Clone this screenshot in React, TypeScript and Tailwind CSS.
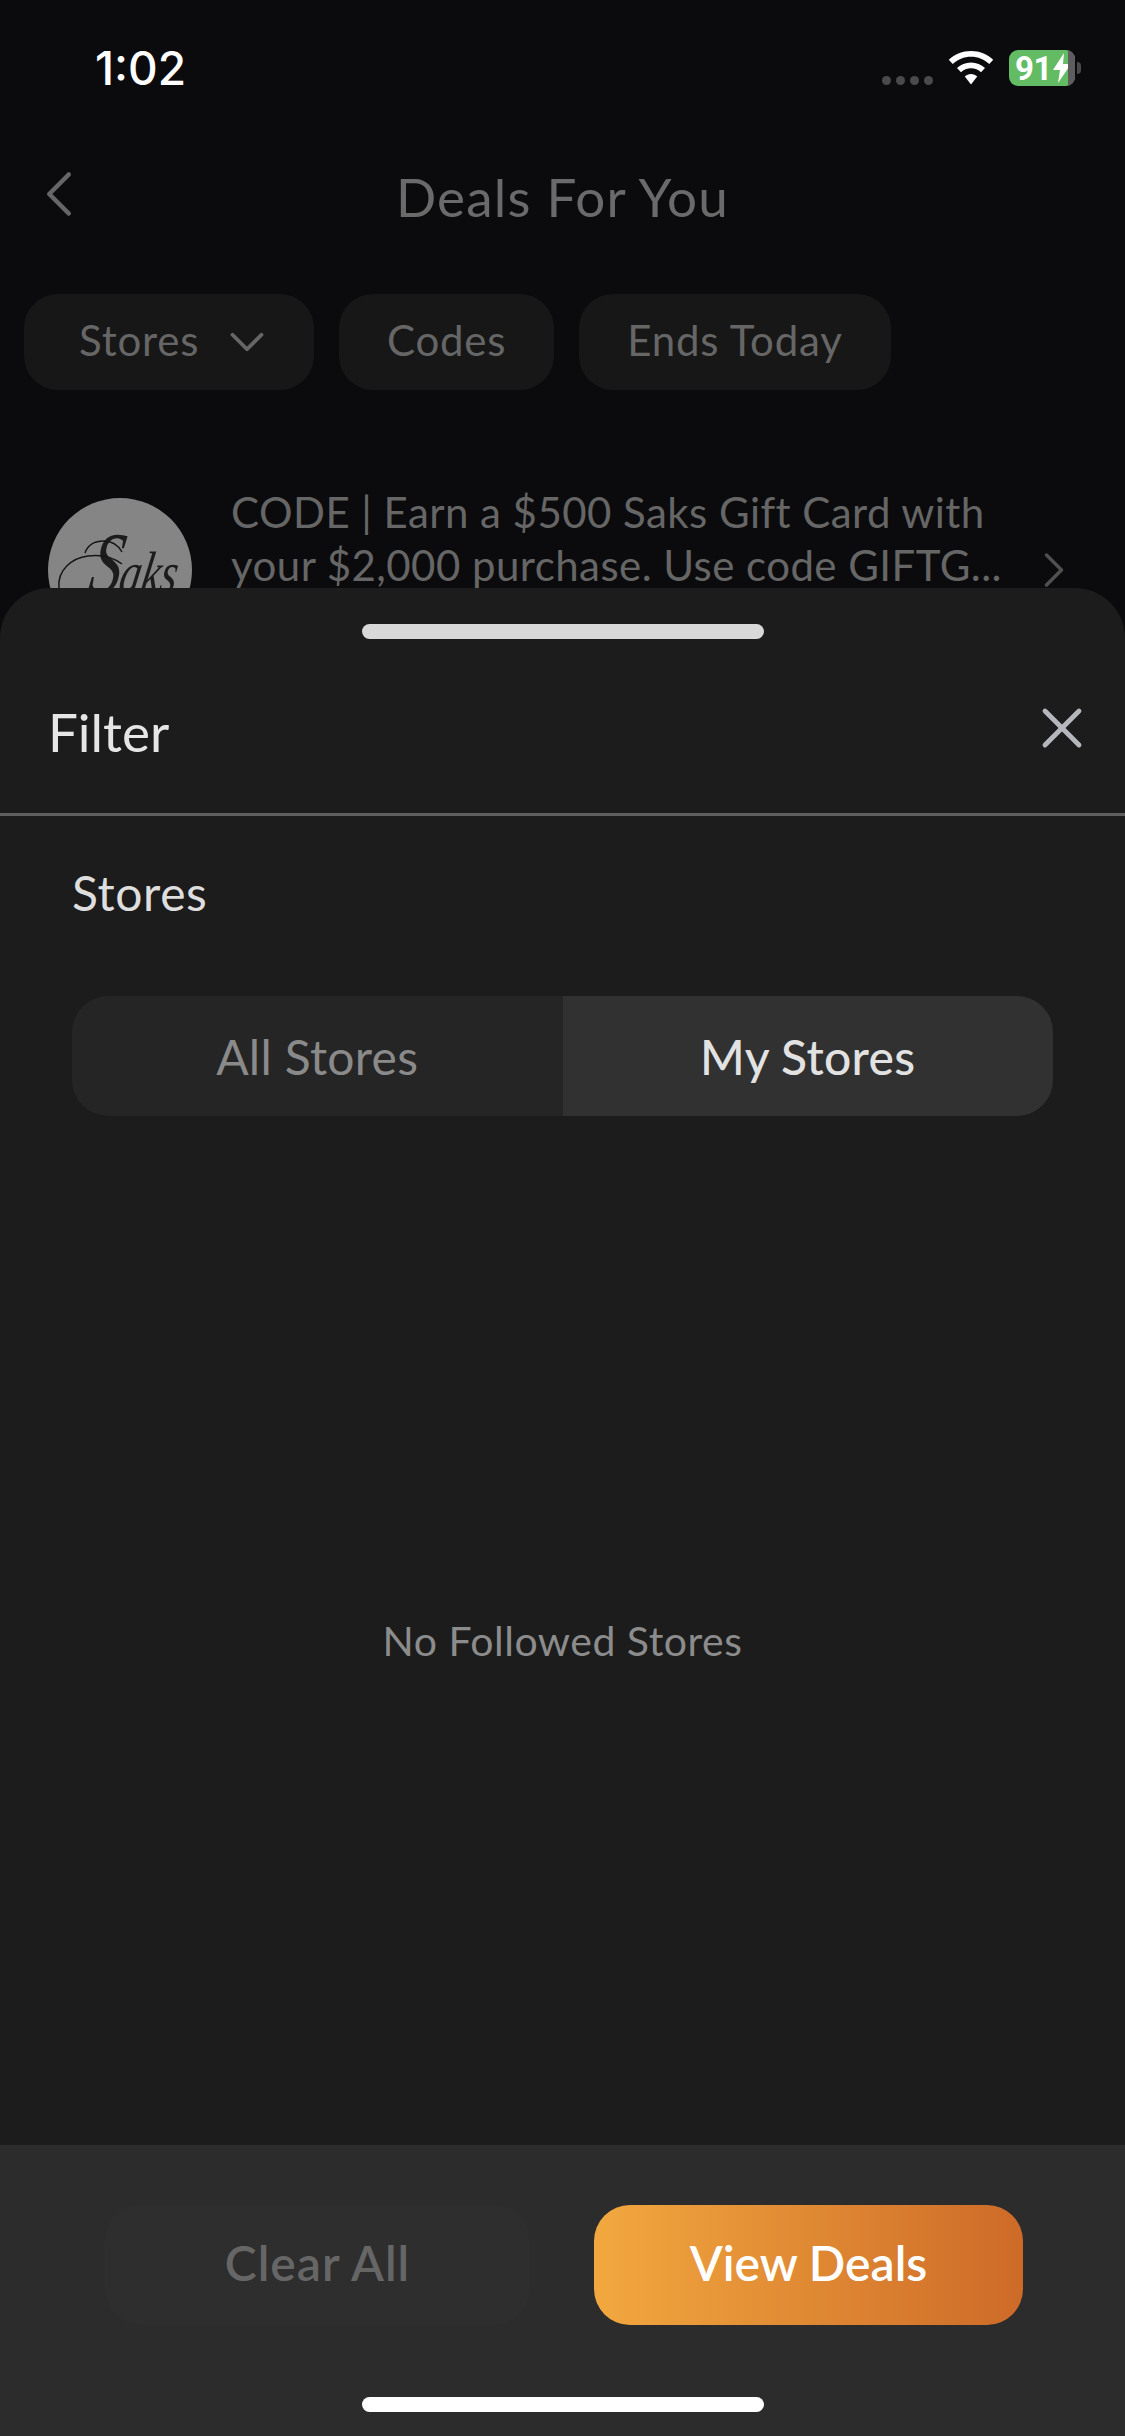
import { ChevronDown, ChevronLeft, ChevronRight, X } from 'lucide-react';

const chips = ['Codes', 'Ends Today'];

function StatusIcons() {
  return (
    <div className="flex items-center">
      <div className="flex gap-[5px] mt-[24px] mr-[15px]">
        {[0, 1, 2, 3].map((d) => (
          <div key={d} className="w-[9px] h-[9px] rounded-full bg-[#4a4a4c]" />
        ))}
      </div>
      <svg width="46" height="34" viewBox="0 0 46 34" className="mr-[15px]">
        <path d="M23 0C14.500 0 6.700 3.300 0.800 8.800L4.700 13C9.600 8.400 16 5.700 23 5.700S36.400 8.400 41.300 13L45.200 8.800C39.300 3.300 31.500 0 23 0Z" fill="#fff" />
        <path d="M23 11.500C17.600 11.500 12.700 13.600 9 17L13 21.300C15.600 18.800 19.100 17.300 23 17.300S30.400 18.800 33 21.300L37 17C33.300 13.600 28.400 11.500 23 11.500Z" fill="#fff" />
        <path d="M23 23C20.600 23 18.400 23.900 16.800 25.500L23 33.500L29.200 25.500C27.600 23.900 25.400 23 23 23Z" fill="#fff" />
      </svg>
      <div className="relative w-[66px] h-[36px] rounded-[9px] overflow-hidden bg-[#63bb63] flex items-center pl-[6px] font-['Roboto',sans-serif] font-bold text-[33px] leading-none text-white tracking-[-0.5px]">
        91
        <svg width="18" height="30" viewBox="0 0 18 30" className="ml-[1px]">
          <path d="M11 0L0 17H7L5 30L18 11H10Z" fill="#fff" />
        </svg>
        <div className="absolute right-0 inset-y-0 w-[7px] bg-[#5d5d5f]" />
      </div>
      <div className="w-[4px] h-[12px] ml-[2px] rounded-r-full bg-[#4a4a4c]" />
    </div>
  );
}

function SaksLogo() {
  return (
    <div className="relative w-[144px] h-[144px] shrink-0 rounded-full bg-[#858585] overflow-hidden">
      <div className="absolute left-[44px] top-[22px] flex items-baseline origin-left scale-x-[0.72] skew-x-[-14deg] font-['Liberation_Serif',serif] italic leading-none text-[#1c1c1c]">
        <span className="text-[88px]">S</span>
        <span className="text-[60px] -ml-[2px]">aks</span>
      </div>
      {/* swash around the script S */}
      <svg width="144" height="144" viewBox="0 0 144 144" className="absolute inset-0" fill="none" stroke="#161616" strokeWidth="1.5">
        <path d="M11 90C9 72 24 60 40 58C54 56 66 60 74 66" />
        <path d="M37 55C40 46 48 43 56 43C64 43 70 47 74 54" />
      </svg>
    </div>
  );
}

export default function App() {
  return (
    <div className="relative w-[1125px] h-[2436px] overflow-hidden bg-[#0b0b0d] font-['Lato',sans-serif]">
      {/* dimmed page behind the sheet */}
      <div className="h-[136px] pl-[95px] pr-[44px] flex items-center justify-between">
        <span className="font-['Inter',sans-serif] font-medium text-[46px] leading-none text-white">1:02</span>
        <StatusIcons />
      </div>

      <div className="relative h-[122px] flex items-center justify-center">
        <ChevronLeft className="absolute left-[20px] top-[19px] w-[78px] h-[78px] text-[#666]" strokeWidth={1.4} />
        <h1 className="mb-[2px] text-[53px] leading-none tracking-[1.2px] text-[#6a6a6a]">Deals For You</h1>
      </div>

      <div className="mt-[36px] pl-[24px] flex gap-[25px] text-[42px] tracking-[0.8px] text-[#666]">
        <div className="h-[96px] w-[290px] pl-[55px] pb-[4px] rounded-[34px] bg-[#171717] flex items-center">
          Stores
          <ChevronDown className="ml-[19px] mt-[4px] w-[58px] h-[58px]" strokeWidth={1.6} />
        </div>
        {chips.map((c) => (
          <div key={c} className="h-[96px] px-[48px] pb-[4px] rounded-[34px] bg-[#171717] flex items-center">
            {c}
          </div>
        ))}
      </div>

      <div className="mt-[108px] pl-[48px] flex items-start">
        <SaksLogo />
        <div className="ml-[39px] w-[781px] -mt-[12px] text-[42px] leading-[53px] tracking-[0.45px] text-[#666]">
          <div className="whitespace-nowrap">CODE | Earn a $500 Saks Gift Card with</div>
          <div className="whitespace-nowrap">your $2,000 purchase. Use code GIFTG...</div>
        </div>
        <ChevronRight className="ml-[12px] mt-[42px] w-[60px] h-[60px] text-[#505050]" strokeWidth={1.4} />
      </div>

      {/* filter sheet */}
      <div className="absolute inset-x-0 top-[588px] bottom-0 rounded-t-[50px] overflow-hidden bg-[#1c1c1c] flex flex-col">
        <div className="mt-[36px] mx-auto w-[402px] h-[15px] rounded-full bg-[#d8d8d8]" />
        <div className="h-[177px] pt-[10px] pl-[48px] pr-[29px] flex items-center justify-between border-b-[3px] border-[#5f5f5f]">
          <span className="text-[53px] leading-none text-[#e6e6e6]">Filter</span>
          <X className="-mt-[6px] w-[68px] h-[68px] text-[#b4b8bc]" strokeWidth={1.7} />
        </div>
        <div className="mt-[53px] pl-[72px] text-[48px] leading-[48px] tracking-[0.6px] text-[#dedede]">Stores</div>
        <div className="mt-[79px] mx-[72px] h-[120px] rounded-[36px] overflow-hidden flex text-[48px] tracking-[0.3px]">
          <div className="w-1/2 pt-[2px] bg-[#252525] flex items-center justify-center text-[#8a8a8a]">All Stores</div>
          <div className="w-1/2 pt-[2px] bg-[#313131] flex items-center justify-center font-medium text-[#e2e2e2]">My Stores</div>
        </div>
        <div className="flex-1 pt-[20px] flex items-center justify-center text-[41px] tracking-[0.5px] text-[#8c8c8c]">No Followed Stores</div>

        <div className="h-[291px] bg-[#2c2c2c] flex flex-col">
          <div className="mt-[60px] pl-[105px] flex gap-[64px] text-[48px] font-semibold">
            <div className="w-[425px] h-[120px] pb-[4px] rounded-[36px] bg-[#2e2e2e] flex items-center justify-center tracking-[1px] text-[#666]">Clear All</div>
            <div className="w-[429px] h-[120px] pb-[4px] rounded-[36px] bg-linear-to-r from-[#f2a83f] to-[#cd6a28] flex items-center justify-center text-white">View Deals</div>
          </div>
          <div className="mt-[72px] mx-auto w-[402px] h-[15px] rounded-full bg-white" />
        </div>
      </div>
    </div>
  );
}
